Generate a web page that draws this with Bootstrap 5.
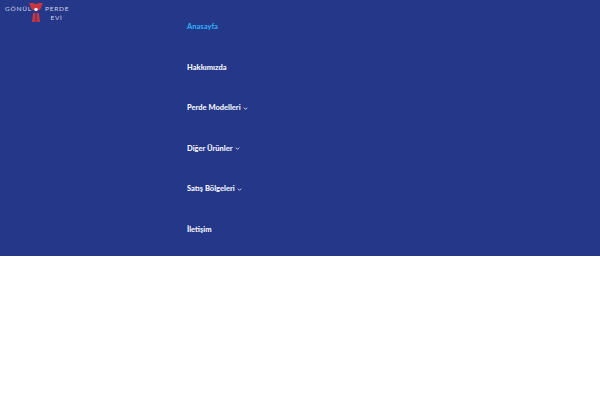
<!DOCTYPE html>
<html lang="tr">
<head>
<meta charset="utf-8">
<title>Gönül Perde Evi</title>
<link href="https://cdn.jsdelivr.net/npm/bootstrap@5.3.0/dist/css/bootstrap.min.css" rel="stylesheet">
<style>
body{background:#fff;font-family:"Lato",sans-serif}
.site-bar{background:#243789;height:256px;align-items:flex-start}
.brand-box{width:187px;height:26px;flex:none}
.brand-link{width:72px;height:26px;color:#cfd6ea;font-family:"Lato",sans-serif;font-size:6.5px;line-height:9px;letter-spacing:.75px;text-decoration:none}
.brand-left{padding:4px 0 0 5px;width:29px;white-space:nowrap}
.brand-right{padding-top:4px;margin-left:2px;text-align:center;width:23px;white-space:nowrap}
.brand-mark{width:14px;height:22px;flex:none;margin-top:1px}
.menu-list{padding-top:6.500px}
.menu-list .nav-link{height:40.5px;padding:0;display:flex;align-items:center;gap:2px;color:#f2f4fa;font-size:7.500px;font-weight:900;line-height:1}
.menu-list .nav-link.active{color:#2fa8f0}
.menu-caret{width:5px;height:5px;flex:none;margin-top:1px}
</style>
</head>
<body>
<nav class="site-bar d-flex">
  <div class="brand-box">
    <a class="brand-link d-flex" href="#">
      <span class="brand-left">GÖNÜL</span>
      <svg class="brand-mark" viewBox="0 0 14 22" aria-hidden="true">
        <path d="M0 2 4 2l3 1 3-1 4 0-3 7H3z" fill="#c9343f"/>
        <circle cx="7" cy="8.500" r="1.800" fill="#e8edf5"/>
        <path d="M4 12h2.500v9H3zM7.500 12H10l1 9H7.500z" fill="#c9343f"/>
      </svg>
      <span class="brand-right">PERDE<br>EVİ</span>
    </a>
  </div>
  <ul class="nav flex-column menu-list">
    <li class="nav-item"><a class="nav-link active" href="#">Anasayfa</a></li>
    <li class="nav-item"><a class="nav-link" href="#">Hakkımızda</a></li>
    <li class="nav-item"><a class="nav-link" href="#">Perde Modelleri <svg class="menu-caret" viewBox="0 0 6 6" aria-hidden="true"><path d="M1 2l2 2 2-2" fill="none" stroke="currentColor"/></svg></a></li>
    <li class="nav-item"><a class="nav-link" href="#">Diğer Ürünler <svg class="menu-caret" viewBox="0 0 6 6" aria-hidden="true"><path d="M1 2l2 2 2-2" fill="none" stroke="currentColor"/></svg></a></li>
    <li class="nav-item"><a class="nav-link" href="#">Satış Bölgeleri <svg class="menu-caret" viewBox="0 0 6 6" aria-hidden="true"><path d="M1 2l2 2 2-2" fill="none" stroke="currentColor"/></svg></a></li>
    <li class="nav-item"><a class="nav-link" href="#">İletişim</a></li>
  </ul>
</nav>
<script src="https://cdn.jsdelivr.net/npm/bootstrap@5.3.0/dist/js/bootstrap.bundle.min.js"></script>
</body>
</html>
